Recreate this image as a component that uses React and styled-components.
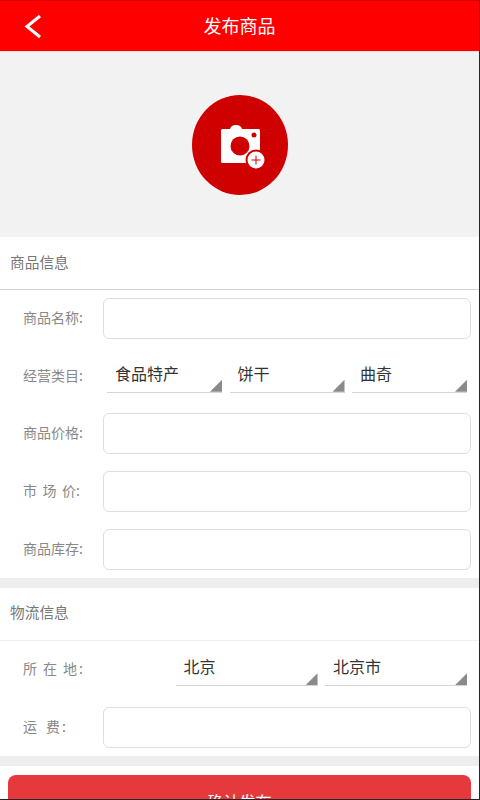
import React from 'react';
import styled, { createGlobalStyle } from 'styled-components';

const GlobalStyle = createGlobalStyle`
    html, body {
        margin: 0;
        padding: 0;
        background: #fff;
    }
    * {
        box-sizing: border-box;
    }
`

const Frame = styled.div`
    width: 480px;
    height: 800px;
    overflow: hidden;
    background: #fff;
    border-right: 1px solid #262626;
    border-bottom: 1px solid #262626;
    font-family: "Noto Sans CJK SC", "Noto Sans", sans-serif;
`

const Header = styled.header`
    display: grid;
    grid-template-columns: 1fr auto 1fr;
    align-items: center;
    height: 52px;
    padding-bottom: 2px;
    background: #ff0000;
    border-top: 1px solid #d40000;
    border-bottom: 1px solid #f7d9d9;
`

const Back = styled.svg`
    display: block;
    width: 24px;
    height: 30px;
    margin: 2px 0 0 22px;
`

const Title = styled.h1`
    margin: 0;
    color: #fff;
    font-size: 18px;
    font-weight: 400;
    line-height: 1;
`

const Hero = styled.div`
    display: flex;
    align-items: center;
    justify-content: center;
    height: 185px;
    background: #f2f2f2;
`

const PhotoButton = styled.div`
    width: 96px;
    height: 100px;
    border-radius: 50%;
    background: #cf0000;
`

const CameraIcon = styled.svg`
    display: block;
    width: 100%;
    height: 100%;
`

const SectionTitle = styled.div`
    display: flex;
    align-items: center;
    height: 53px;
    padding: 0 0 4px 10px;
    color: #777;
    font-size: 14.7px;
    border-bottom: 1px solid ${props => props.$strong ? '#d2d2d2' : '#eee'};
`

const Fields = styled.div`
    display: flex;
    flex-direction: column;
    gap: 16.67px;
    padding: ${props => props.$pad || '8px'} 8px ${props => props.$pad || '8px'} 0;
`

const Row = styled.div`
    display: flex;
    align-items: flex-start;
    height: 41px;
`

const Label = styled.label`
    flex: 0 0 103px;
    padding-left: 23px;
    color: #888;
    font-size: 14px;
    line-height: 39px;
    white-space: nowrap;
    letter-spacing: ${props => props.$spacing || '0'};
`

// last character and colon sit closer together than the spread ones
const LabelEnd = styled.span`
    letter-spacing: ${props => props.$spacing || '0'};
`

const Input = styled.input`
    flex: 1;
    min-width: 0;
    height: 41px;
    padding: 0 10px;
    background: #fff;
    border: 1px solid #dedede;
    border-radius: 6px;
    outline: none;
`

const SelectGroup = styled.div`
    flex: 1;
    display: flex;
    justify-content: flex-end;
    gap: 7.5px;
    padding-right: 4px;
`

const Select = styled.div`
    position: relative;
    flex: 0 0 ${props => props.$width};
    height: 37px;
    padding-left: 8px;
    color: #333;
    font-size: 16px;
    line-height: 35px;
    border-bottom: 1px solid #d4d4d4;

    &::after {
        content: '';
        position: absolute;
        right: 0;
        bottom: 0;
        width: 12px;
        height: 12px;
        background: #8a8a8a;
        clip-path: polygon(100% 0, 100% 100%, 0 100%);
    }
`

const Divider = styled.div`
    height: 10px;
    background: #eee;
`

const Actions = styled.div`
    padding: 8.33px 8px 0;
`

const Submit = styled.button`
    display: block;
    width: 100%;
    height: 52px;
    padding: 0;
    background: #e6393d;
    border: 0;
    border-radius: 8px;
    color: #fff;
    font-family: inherit;
    font-size: 16px;
`

export default function App() {
    return (
        <Frame>
            <GlobalStyle />
            <Header>
                <Back viewBox="0 0 24 30">
                    <polyline points="18,5 5,15.500 18,26" fill="none" stroke="#fff" strokeWidth="3" />
                </Back>
                <Title>发布商品</Title>
            </Header>
            <Hero>
                <PhotoButton>
                    <CameraIcon viewBox="0 0 96 100">
                        <path d="M30.500 34H38Q39 30 44 30Q49 30 50 34H66.500Q68 34 68 35.500V66.500Q68 68 66.500 68H30.500Q29 68 29 66.500V35.500Q29 34 30.500 34Z" fill="#fff" />
                        <circle cx="48" cy="51" r="9.500" fill="#cf0000" />
                        <circle cx="62" cy="40" r="2.500" fill="#cf0000" />
                        <circle cx="64" cy="65" r="10.500" fill="#cf0000" />
                        <circle cx="64" cy="65" r="8.500" fill="#fff" />
                        <path d="M59.500 65H68.500M64 60.500V69.500" stroke="#cf0000" strokeWidth="1" />
                    </CameraIcon>
                </PhotoButton>
            </Hero>

            <SectionTitle $strong>商品信息</SectionTitle>
            <Fields>
                <Row>
                    <Label>商品名称:</Label>
                    <Input />
                </Row>
                <Row>
                    <Label>经营类目:</Label>
                    <SelectGroup>
                        <Select $width="115px">食品特产</Select>
                        <Select $width="115px">饼干</Select>
                        <Select $width="115px">曲奇</Select>
                    </SelectGroup>
                </Row>
                <Row>
                    <Label>商品价格:</Label>
                    <Input />
                </Row>
                <Row>
                    <Label $spacing="5.500px">市场<LabelEnd>价:</LabelEnd></Label>
                    <Input />
                </Row>
                <Row>
                    <Label>商品库存:</Label>
                    <Input />
                </Row>
            </Fields>
            <Divider />

            <SectionTitle>物流信息</SectionTitle>
            <Fields $pad="8.600px">
                <Row>
                    <Label $spacing="6px">所在<LabelEnd $spacing="2px">地:</LabelEnd></Label>
                    <SelectGroup>
                        <Select $width="142px">北京</Select>
                        <Select $width="142px">北京市</Select>
                    </SelectGroup>
                </Row>
                <Row>
                    <Label $spacing="9px">运<LabelEnd $spacing="2px">费:</LabelEnd></Label>
                    <Input />
                </Row>
            </Fields>
            <Divider />

            <Actions>
                <Submit>确认发布</Submit>
            </Actions>
        </Frame>
    )
}
